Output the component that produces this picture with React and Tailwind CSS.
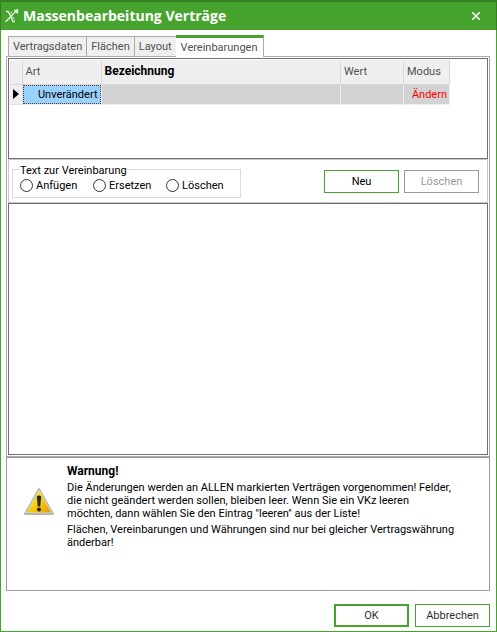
import { useState } from "react";

const tabs = ["Vertragsdaten", "Flächen", "Layout", "Vereinbarungen"];
const textModes = ["Anfügen", "Ersetzen", "Löschen"];
const rows = [{ art: "Unverändert", name: "", value: "", mode: "Ändern" }];

function AppLogo() {
  return (
    <svg className="w-4 h-4" viewBox="0 0 16 16" fill="none" stroke="#e4f3df">
      <path d="M2 3.500H4C6 6 7 9 9 13.500H11" strokeWidth="1.400" />
      <path d="M1.500 13.500C4 12.500 7 7 12.500 3" strokeWidth="1.400" />
      <path d="M10 2.500L14 1.500L13.500 5.500Z" fill="#e4f3df" strokeWidth="0.800" />
      <path d="M6.500 6L8 3.500M8.500 8.500L10.500 11.500" strokeWidth="0.800" />
    </svg>
  );
}

function WarningIcon() {
  return (
    <svg className="w-8 h-8 shrink-0" viewBox="0 0 32 32">
      <defs>
        <linearGradient id="warn" x1="0" y1="0" x2="1" y2="1">
          <stop offset="0" stopColor="#fff04a" />
          <stop offset="0.5" stopColor="#f5cf10" />
          <stop offset="1" stopColor="#e89a08" />
        </linearGradient>
      </defs>
      <path
        d="M16 3L30 28H2Z"
        fill="#b5b5b5"
        stroke="#b5b5b5"
        strokeWidth="2"
        strokeLinejoin="round"
      />
      <path d="M16 3.500L29 27H3Z" fill="#dedede" />
      <path d="M16 4.500L28 26.500H4Z" fill="url(#warn)" />
      <path d="M13.800 10.500Q16 8.500 18.200 10.500L17.200 20.500H14.800Z" fill="#26261c" />
      <circle cx="16" cy="23.600" r="2" fill="#26261c" />
    </svg>
  );
}

export default function App() {
  const [activeTab, setActiveTab] = useState("Vereinbarungen");
  const [textMode, setTextMode] = useState("");
  const [text, setText] = useState("");

  return (
    <div className="min-h-screen flex flex-col bg-white border border-[#46a42e] font-['Roboto',sans-serif] text-[11px] leading-[13px] text-black">
      {/* Title bar */}
      <header className="-mx-px -mt-px h-[30px] flex items-center pl-[3px] pr-3 bg-[#46a42e] border-t-2 border-x border-[#357e23] text-white">
        <AppLogo />
        <h1 className="ml-[3px] pb-0.5 font-['Open_Sans',sans-serif] text-[14px] font-bold">
          Massenbearbeitung Verträge
        </h1>
        <button aria-label="Schließen" className="ml-auto w-4 h-4 flex items-center justify-center">
          <svg className="w-2 h-2" viewBox="0 0 8 8" stroke="white" strokeWidth="1.500">
            <path d="M0 0L8 8M8 0L0 8" />
          </svg>
        </button>
      </header>

      <main className="flex-1 flex flex-col pl-[5px] pr-1.5 pt-[5px]">
        {/* Tabs */}
        <div role="tablist" className="flex items-end pl-0.5 -mb-px z-10 text-[#505050]">
          {tabs.map((tab) => (
            <button
              key={tab}
              role="tab"
              aria-selected={tab === activeTab}
              onClick={() => setActiveTab(tab)}
              className={
                tab === activeTab
                  ? "h-[22px] not-first:-ml-px px-[5px] bg-white border-t-3 border-r border-r-[#ababab] border-t-[#46a42e]"
                  : "h-5 mb-px not-first:-ml-px px-1 bg-[#efefef] border border-b-0 border-[#ababab]"
              }
            >
              {tab}
            </button>
          ))}
        </div>

        <section className="flex-1 flex flex-col border border-[#ababab] p-px">
          {/* Agreements */}
          <div className="h-[101px] border border-[#707070] p-px pr-[37px]">
            <table className="w-full table-fixed border-collapse">
              <colgroup>
                <col className="w-3" />
                <col className="w-[79px]" />
                <col />
                <col className="w-[63px]" />
                <col className="w-[46px]" />
              </colgroup>
              <thead>
                <tr className="h-6 bg-[#efefef] text-left text-[#505050]">
                  <th className="border-r border-b border-[#d8d8d8]"></th>
                  <th className="border-r border-b border-[#d8d8d8] pl-[3px] font-normal">Art</th>
                  <th className="border-r border-b border-[#d8d8d8] pl-[3px] text-xs leading-[13px] font-bold text-black">
                    Bezeichnung
                  </th>
                  <th className="border-r border-b border-[#d8d8d8] pl-[3px] font-normal">Wert</th>
                  <th className="border-r border-b border-[#d8d8d8] pl-[3px] font-normal">Modus</th>
                </tr>
              </thead>
              <tbody>
                {rows.map((row) => (
                  <tr key={row.art} className="h-5 bg-[#d2d2d2]">
                    <td className="bg-[#efefef] border-r border-b border-[#e0e0e0]">
                      <svg className="ml-[3px] w-1.5 h-2.5" viewBox="0 0 6 10">
                        <path d="M0 0L6 5L0 10Z" />
                      </svg>
                    </td>
                    <td className="border-r border-b border-[#efefef] bg-[#99d1ff]">
                      <div className="h-[19px] border border-dotted border-[#5c3b20] pr-0.5 leading-[17px] text-right">
                        {row.art}
                      </div>
                    </td>
                    <td className="border-r border-b border-[#efefef]">{row.name}</td>
                    <td className="border-r border-b border-[#efefef]">{row.value}</td>
                    <td className="border-r border-b border-[#efefef] pr-0.5 text-right text-[#ff0000]">
                      {row.mode}
                    </td>
                  </tr>
                ))}
              </tbody>
            </table>
          </div>

          {/* Text options */}
          <div className="flex items-start justify-between border border-[#c8c8c8] pt-[5px] pb-1 pl-[3px] pr-2">
            <fieldset className="w-[229px] h-[33px] border border-[#dcdcdc] px-[7px]">
              <legend className="h-2 leading-[11px]">Text zur Vereinbarung</legend>
              <div className="flex pt-1.5">
                {textModes.map((mode) => (
                  <label key={mode} className="w-[73px] last:w-auto flex items-center gap-[3px]">
                    <input
                      type="radio"
                      name="textMode"
                      checked={textMode === mode}
                      onChange={() => setTextMode(mode)}
                      className="appearance-none w-[13px] h-[13px] shrink-0 rounded-full border border-[#333333] bg-white checked:border-4"
                    />
                    {mode}
                  </label>
                ))}
              </div>
            </fieldset>
            <div className="flex gap-[5px] pt-[5px]">
              <button className="w-[75px] h-[23px] border border-[#46a42e]">Neu</button>
              <button disabled className="w-[75px] h-[23px] border border-[#999999] text-[#999999]">
                Löschen
              </button>
            </div>
          </div>

          <textarea
            aria-label="Text zur Vereinbarung"
            value={text}
            onChange={(e) => setText(e.target.value)}
            className="flex-1 min-h-24 resize-none border border-[#707070] p-1 outline-none"
          />
        </section>

        {/* Warning */}
        <section className="min-h-[134px] border border-[#9a9a9a] flex pl-4 pr-[34px] pt-[7px]">
          <div className="pt-[21px]">
            <WarningIcon />
          </div>
          <div className="ml-3">
            <h2 className="mb-[3px] text-xs leading-[13px] font-bold">Warnung!</h2>
            <p className="mb-[3px]">
              Die Änderungen werden an ALLEN markierten Verträgen vorgenommen! Felder, die nicht
              geändert werden sollen, bleiben leer. Wenn Sie ein VKz leeren möchten, dann wählen
              Sie den Eintrag "leeren" aus der Liste!
            </p>
            <p>
              Flächen, Vereinbarungen und Währungen sind nur bei gleicher Vertragswährung änderbar!
            </p>
          </div>
        </section>
      </main>

      <footer className="flex justify-end gap-1.5 pl-[5px] pr-1.5 pt-[13px] pb-1 text-[#303030]">
        <button className="w-[75px] h-[23px] border-2 border-[#46a42e]">OK</button>
        <button className="w-[75px] h-[23px] border border-[#46a42e]">Abbrechen</button>
      </footer>
    </div>
  );
}
